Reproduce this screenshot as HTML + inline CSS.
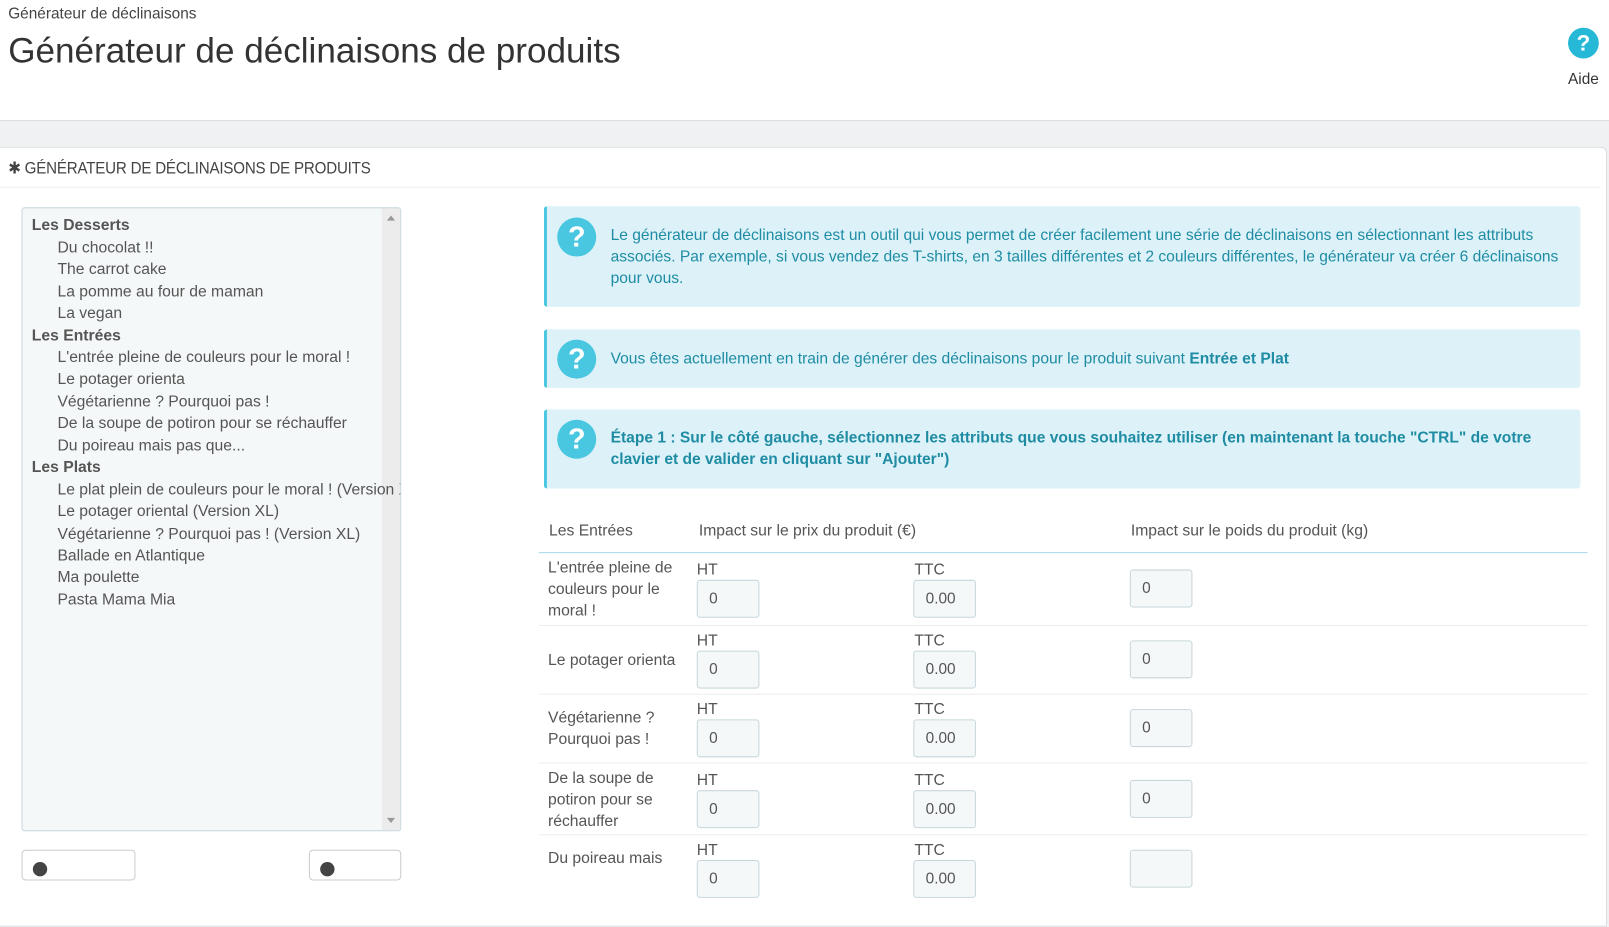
<!DOCTYPE html>
<html><head><meta charset="utf-8"><style>
*{box-sizing:border-box;margin:0;padding:0}
body{width:1609px;height:865px;overflow:hidden;background:#eff1f2;font-family:"Liberation Sans",sans-serif;color:#555;font-size:15px;position:relative}
#w{position:absolute;left:0;top:0;width:1568px;height:843px;transform:scale(1.0262);transform-origin:0 0}
.top{position:absolute;left:0;top:0;width:1568px;height:118px;background:#fff;border-bottom:1px solid #d9dde0}
.bc{position:absolute;left:8px;top:5px;font-size:15px;color:#444}
h1{position:absolute;left:8px;top:31px;font-size:34.2px;font-weight:normal;color:#333}
.help{position:absolute;left:1528px;top:27px;width:30px;height:30px;border-radius:50%;background:#25b9d7;color:#fff;font-weight:bold;font-size:22px;text-align:center;line-height:30px}
.aide{position:absolute;left:1528px;top:69px;font-size:15px;color:#333}
.panel{position:absolute;left:0;top:143px;width:1566px;height:760px;background:#fff;border:1px solid #d9dde0;border-left:none;border-radius:0 6px 0 0}
.ph{position:absolute;left:8px;top:10px;font-size:16px;color:#444;letter-spacing:-.2px;transform:scaleX(.92);transform-origin:0 0}
.phl{position:absolute;left:0;top:38px;width:1560px;border-top:1px solid #eee}
.list{position:absolute;left:21px;top:58px;width:370px;height:608px;background:#f5f8f9;border:1px solid #c7d6db;border-radius:3px;overflow:hidden}
.sb{position:absolute;right:0;top:0;width:18px;height:100%;background:#ececec}
.list div.i{position:absolute;white-space:nowrap;font-size:15.3px;color:#555}
.list b{color:#555}
.btn{position:absolute;top:684px;height:30px;border:1px solid #ccc;border-radius:4px;background:#fff;overflow:hidden}
.btn i{position:absolute;left:10px;top:11px;width:14px;height:14px;border-radius:50%;background:#444}
.al{position:absolute;left:530px;width:1010px;background:#dcf2f8;border-left:3px solid #4ac7e0;border-radius:3px;color:#1f8ca4;font-size:15.2px;line-height:21px}
.al .q{position:absolute;left:10px;width:38px;height:38px;border-radius:50%;background:#4ac7e0;color:#fff;font-weight:bold;font-size:28px;text-align:center;line-height:38px}
.al p{position:absolute;left:62px;right:10px}
.t{position:absolute;font-size:15.3px;color:#555;line-height:21px}
.hr{position:absolute;left:525px;width:1022px;border-top:1px solid #eee}
.inp{position:absolute;width:61px;height:37px;background:#f5f8f9;border:1px solid #c7d6db;border-radius:3px;font-size:15px;color:#555;padding:9px 0 0 11px}
</style></head><body><div id="w">
<div class="top"><div class="bc">Générateur de déclinaisons</div><h1>Générateur de déclinaisons de produits</h1><div class="help">?</div><div class="aide">Aide</div></div>
<div class="panel">
<div class="ph">✱ GÉNÉRATEUR DE DÉCLINAISONS DE PRODUITS</div><div class="phl"></div>
<div class="list"><div class="sb"><div style="position:absolute;left:5px;top:7px;border:4px solid transparent;border-bottom:5px solid #999;border-top:none"></div><div style="position:absolute;left:5px;bottom:7px;border:4px solid transparent;border-top:5px solid #999;border-bottom:none"></div></div>
<div class="i" style="left:9px;top:8px"><b>Les Desserts</b></div>
<div class="i" style="left:34px;top:30px">Du chocolat !!</div>
<div class="i" style="left:34px;top:51px">The carrot cake</div>
<div class="i" style="left:34px;top:73px">La pomme au four de maman</div>
<div class="i" style="left:34px;top:94px">La vegan</div>
<div class="i" style="left:9px;top:116px"><b>Les Entrées</b></div>
<div class="i" style="left:34px;top:137px">L'entrée pleine de couleurs pour le moral !</div>
<div class="i" style="left:34px;top:158px">Le potager orienta</div>
<div class="i" style="left:34px;top:180px">Végétarienne ? Pourquoi pas !</div>
<div class="i" style="left:34px;top:201px">De la soupe de potiron pour se réchauffer</div>
<div class="i" style="left:34px;top:223px">Du poireau mais pas que...</div>
<div class="i" style="left:9px;top:244px"><b>Les Plats</b></div>
<div class="i" style="left:34px;top:266px">Le plat plein de couleurs pour le moral ! (Version XL)</div>
<div class="i" style="left:34px;top:287px">Le potager oriental (Version XL)</div>
<div class="i" style="left:34px;top:309px">Végétarienne ? Pourquoi pas ! (Version XL)</div>
<div class="i" style="left:34px;top:330px">Ballade en Atlantique</div>
<div class="i" style="left:34px;top:351px">Ma poulette</div>
<div class="i" style="left:34px;top:373px">Pasta Mama Mia</div>
</div>
<div class="btn" style="left:21px;width:111px"><i></i></div><div class="btn" style="left:301px;width:90px"><i></i></div>
</div>
<div class="al" style="top:201px;height:98px"><div class="q" style="top:11px">?</div><p style="top:18px">Le générateur de déclinaisons est un outil qui vous permet de créer facilement une série de déclinaisons en sélectionnant les attributs associés. Par exemple, si vous vendez des T-shirts, en 3 tailles différentes et 2 couleurs différentes, le générateur va créer 6 déclinaisons pour vous.</p></div>
<div class="al" style="top:321px;height:57px"><div class="q" style="top:10px">?</div><p style="top:18px">Vous êtes actuellement en train de générer des déclinaisons pour le produit suivant <b>Entrée et Plat</b></p></div>
<div class="al" style="top:399px;height:77px"><div class="q" style="top:10px">?</div><p style="top:17px;font-weight:bold">Étape 1 : Sur le côté gauche, sélectionnez les attributs que vous souhaitez utiliser (en maintenant la touche "CTRL" de votre clavier et de valider en cliquant sur "Ajouter")</p></div>
<div class="t" style="left:535px;top:507px">Les Entrées</div>
<div class="t" style="left:681px;top:507px">Impact sur le prix du produit (€)</div>
<div class="t" style="left:1102px;top:507px">Impact sur le poids du produit (kg)</div>
<div class="hr" style="top:538px;border-color:#a8d8ea"></div>
<div class="hr" style="top:609px"></div><div class="hr" style="top:676px"></div><div class="hr" style="top:743px"></div><div class="hr" style="top:813px"></div>
<div class="t" style="left:534px;top:543px;width:130px">L'entrée pleine de couleurs pour le moral !</div>
<div class="t" style="left:534px;top:633px">Le potager orienta</div>
<div class="t" style="left:534px;top:689px;width:130px">Végétarienne ? Pourquoi pas !</div>
<div class="t" style="left:534px;top:748px;width:130px">De la soupe de potiron pour se réchauffer</div>
<div class="t" style="left:534px;top:826px">Du poireau mais</div>
<div class="t" style="left:679px;top:545px">HT</div><div class="t" style="left:891px;top:545px">TTC</div>
<div class="inp" style="left:679px;top:565px">0</div><div class="inp" style="left:890px;top:565px;width:61px">0.00</div><div class="inp" style="left:1101px;top:555px">0</div>
<div class="t" style="left:679px;top:614px">HT</div><div class="t" style="left:891px;top:614px">TTC</div>
<div class="inp" style="left:679px;top:634px">0</div><div class="inp" style="left:890px;top:634px">0.00</div><div class="inp" style="left:1101px;top:624px">0</div>
<div class="t" style="left:679px;top:681px">HT</div><div class="t" style="left:891px;top:681px">TTC</div>
<div class="inp" style="left:679px;top:701px">0</div><div class="inp" style="left:890px;top:701px">0.00</div><div class="inp" style="left:1101px;top:691px">0</div>
<div class="t" style="left:679px;top:750px">HT</div><div class="t" style="left:891px;top:750px">TTC</div>
<div class="inp" style="left:679px;top:770px">0</div><div class="inp" style="left:890px;top:770px">0.00</div><div class="inp" style="left:1101px;top:760px">0</div>
<div class="t" style="left:679px;top:818px">HT</div><div class="t" style="left:891px;top:818px">TTC</div>
<div class="inp" style="left:679px;top:838px">0</div><div class="inp" style="left:890px;top:838px">0.00</div><div class="inp" style="left:1101px;top:828px"></div>
</div></body></html>
